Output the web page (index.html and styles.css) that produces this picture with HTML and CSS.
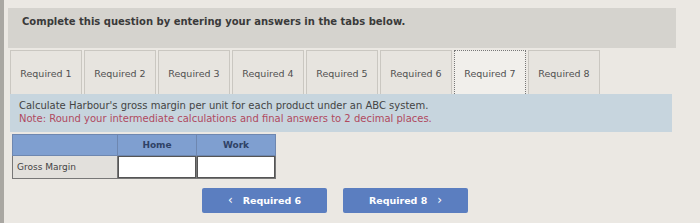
FILE: index.html
```html
<!DOCTYPE html>
<html lang="en">
<head>
  <meta charset="UTF-8">
  <title>Required 7</title>
  <link rel="stylesheet" href="styles.css">
</head>
<body>
  <div class="page">
    <div class="intro">Complete this question by entering your answers in the tabs below.</div>

    <div class="tabs">
      <div class="tab">Required 1</div>
      <div class="tab">Required 2</div>
      <div class="tab">Required 3</div>
      <div class="tab">Required 4</div>
      <div class="tab">Required 5</div>
      <div class="tab">Required 6</div>
      <div class="tab active">Required 7</div>
      <div class="tab">Required 8</div>
    </div>

    <div class="prompt">
      Calculate Harbour's gross margin per unit for each product under an ABC system.<br>
      <span class="note">Note: Round your intermediate calculations and final answers to 2 decimal places.</span>
    </div>

    <table class="answers">
      <tr>
        <th></th>
        <th>Home</th>
        <th>Work</th>
      </tr>
      <tr>
        <td class="label">Gross Margin</td>
        <td class="cell"><input type="text"></td>
        <td class="cell"><input type="text"></td>
      </tr>
    </table>

    <div class="nav">
      <a class="navBtn" href="#"><span class="chev">&lsaquo;</span>Required 6</a>
      <a class="navBtn" href="#">Required 8<span class="chev after">&rsaquo;</span></a>
    </div>
  </div>
</body>
</html>
```

FILE: styles.css
```css
body {
  margin: 0;
  background: #ebe8e3;
  font-family: "DejaVu Sans", Verdana, sans-serif;
  color: #4a4a4a;
}

.page {
  border-left: 4px solid #a9a7a2;
  height: 223px;
  padding-top: 8px;
  box-sizing: border-box;
}

.intro {
  margin: 0 24px 0 4px;
  height: 40px;
  padding: 8px 0 0 14px;
  box-sizing: border-box;
  background: #d5d3ce;
  font-size: 10px;
  font-weight: bold;
  color: #3a3a3a;
}

.tabs {
  display: flex;
  gap: 2px;
  margin: 2px 0 0 6px;
}

.tab {
  width: 72px;
  height: 44px;
  line-height: 46px;
  text-align: center;
  box-sizing: border-box;
  border: 1px solid #cac7c1;
  border-bottom: none;
  background: #e7e4df;
  font-size: 9.5px;
  color: #505050;
}

.tab.active {
  background: #f1efeb;
  border: 1px dotted #777;
  border-bottom: none;
}

/* question text under the tabs */
.prompt {
  margin: 0 28px 0 6px;
  height: 38px;
  padding: 5px 9px 0;
  box-sizing: border-box;
  background: #c7d5de;
  font-size: 10px;
  line-height: 13px;
  color: #444;
}

.note {
  color: #b04a5e;
}

.answers {
  border-collapse: collapse;
  margin: 2px 0 0 8px;
  font-size: 9px;
}

.answers th {
  background: #7f9fd0;
  height: 20px;
  padding: 0;
  color: #2f4266;
  font-weight: bold;
  border: 1px solid #6e87b0;
}

.answers th:first-child {
  width: 104px;
}

.answers th + th {
  width: 78px;
}

.answers td {
  height: 22px;
  padding: 0;
  border: 1px solid #777;
}

.label {
  background: #e2e0dc;
  padding-left: 4px !important;
  color: #444;
}

.cell {
  background: #fff;
}

.cell input {
  display: block;
  width: 100%;
  height: 100%;
  border: 1px solid #555;
  box-sizing: border-box;
  background: #fff;
}

.nav {
  display: flex;
  gap: 16px;
  margin: 9px 0 0 198px;
}

.navBtn {
  width: 125px;
  height: 25px;
  line-height: 25px;
  text-align: center;
  background: #5b7ec0;
  color: #fff;
  font-size: 9.5px;
  font-weight: bold;
  text-decoration: none;
  border-radius: 2px;
}

.chev {
  font-weight: normal;
  font-size: 12px;
  margin-right: 10px;
}

.chev.after {
  margin: 0 0 0 10px;
}
```
